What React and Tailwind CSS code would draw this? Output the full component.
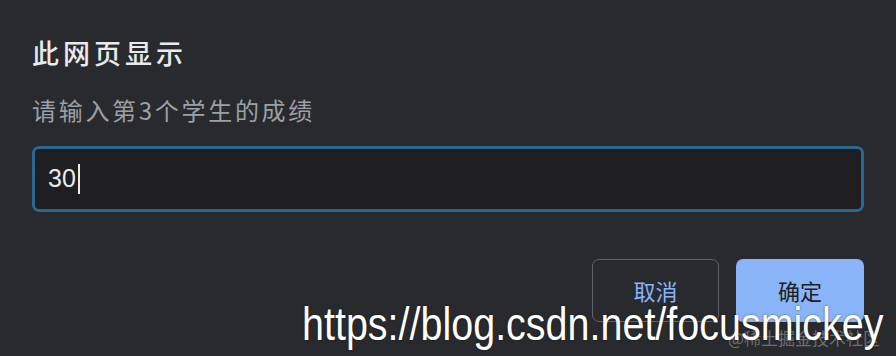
import React from "react";

const cjk = { fontFamily: '"Noto Sans CJK SC", "Noto Sans", sans-serif' };

function Dialog() {
  return (
    <div className="relative w-[896px] h-[356px] bg-[#292a2d] overflow-hidden" style={cjk}>
      <div className="flex flex-col pl-[32px] pr-[32px] pt-[34px]">
        <h1 className="text-[27px] leading-[38px] text-[#e8eaed] font-medium tracking-[4px]">
          此网页显示
        </h1>
        <p className="mt-[23px] text-[24px] leading-[30px] text-[#9aa0a6] tracking-[2.7px]">
          请输入第3个学生的成绩
        </p>
        <div className="mt-[21px] h-[66px] rounded-[7px] border-[3px] border-[#2b6790] bg-[#1f1f21] flex items-center pl-[13px]">
          <span className="text-[25px] text-[#e8eaed]" style={{ fontFamily: '"Liberation Sans", sans-serif' }}>30</span>
          <span className="ml-[2px] w-[2px] h-[30px] bg-[#e8eaed]" />
        </div>
        <div className="mt-[47px] flex justify-end gap-[17px]">
          <button className="w-[127px] h-[63px] rounded-[7px] border border-[#5f6368] text-[22px] text-[#8ab4f8]">
            取消
          </button>
          <button className="w-[128px] h-[63px] rounded-[7px] bg-[#8ab4f8] text-[22px] text-[#202124]">
            确定
          </button>
        </div>
      </div>

      <div className="absolute left-[728px] top-[327px] text-[17px] leading-[22px] text-[#6d6e70] whitespace-nowrap">
        @稀土掘金技术社区
      </div>
      <div
        className="absolute left-[302px] top-[296px] text-[47px] leading-[56px] text-white whitespace-nowrap origin-left scale-x-[0.84]"
        style={{ fontFamily: '"Liberation Sans", Arial, sans-serif', textShadow: "0 0 2px rgba(0,0,0,0.6)" }}
      >
        https://blog.csdn.net/focusmickey
      </div>
    </div>
  );
}

export default function App() {
  return <Dialog />;
}
